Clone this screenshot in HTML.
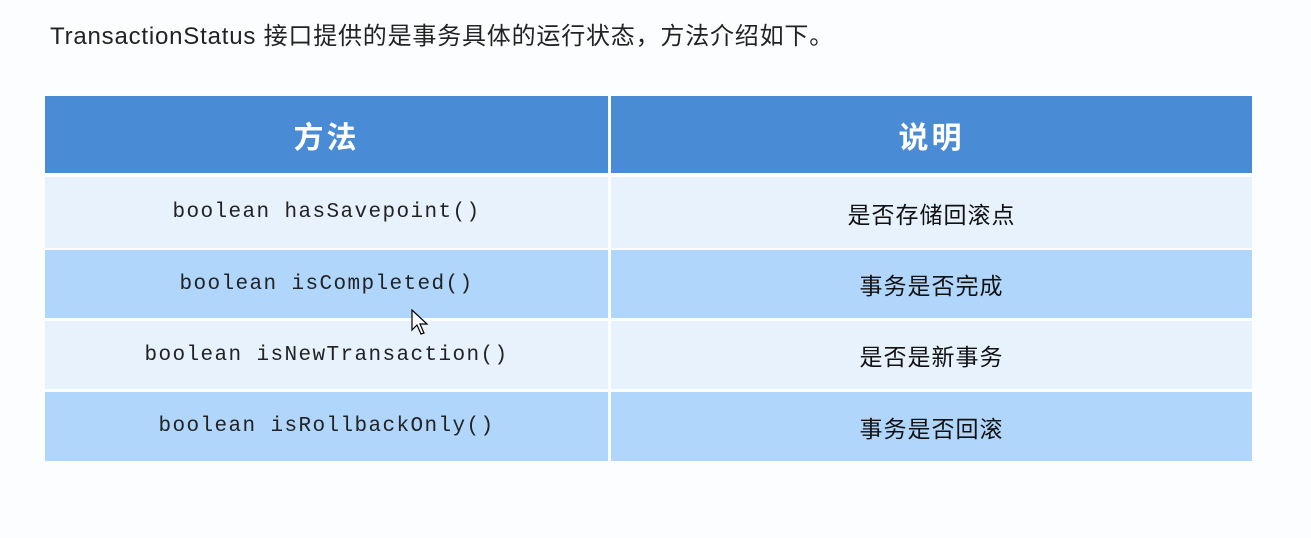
<!DOCTYPE html>
<html><head><meta charset="utf-8"><style>
body{margin:0;width:1311px;height:538px;background:#fcfdfe;position:relative;overflow:hidden;font-family:"Liberation Sans","Noto Sans CJK SC",sans-serif}
.t{position:absolute;left:50px;top:16px;font-size:24px;color:#222;letter-spacing:0.8px}
.c{position:absolute;display:flex;align-items:center;justify-content:center}
.h{background:#4a8bd6;color:#fff;font-size:30px;font-weight:bold;letter-spacing:3px}
.l{background:#e7f2fd}
.d{background:#b1d6fc}
.m{font-family:"Liberation Mono",monospace;font-size:21px;letter-spacing:1.4px;color:#222}
.z{font-size:23px;letter-spacing:1px;color:#111}
</style></head><body>
<div class="t">TransactionStatus 接口提供的是事务具体的运行状态，方法介绍如下。</div>
<div class="c h" style="left:45px;top:96px;width:563px;height:77px">方法</div>
<div class="c h" style="left:611px;top:96px;width:641px;height:77px">说明</div>

<div class="c l m" style="left:45px;top:177px;width:563px;height:71px">boolean hasSavepoint()</div>
<div class="c l z" style="left:611px;top:177px;width:641px;height:71px">是否存储回滚点</div>
<div class="c d m" style="left:45px;top:250px;width:563px;height:68px">boolean isCompleted()</div>
<div class="c d z" style="left:611px;top:250px;width:641px;height:68px">事务是否完成</div>
<div class="c l m" style="left:45px;top:321px;width:563px;height:68px">boolean isNewTransaction()</div>
<div class="c l z" style="left:611px;top:321px;width:641px;height:68px">是否是新事务</div>
<div class="c d m" style="left:45px;top:392px;width:563px;height:69px">boolean isRollbackOnly()</div>
<div class="c d z" style="left:611px;top:392px;width:641px;height:69px">事务是否回滚</div>
<svg style="position:absolute;left:411px;top:309px" width="20" height="28" viewBox="0 0 20 28"><path d="M1 1 L1 21 L6 16 L10 25 L13 24 L9 15 L16 15 Z" fill="#fff" stroke="#000" stroke-width="1.2"/></svg>
</body></html>
